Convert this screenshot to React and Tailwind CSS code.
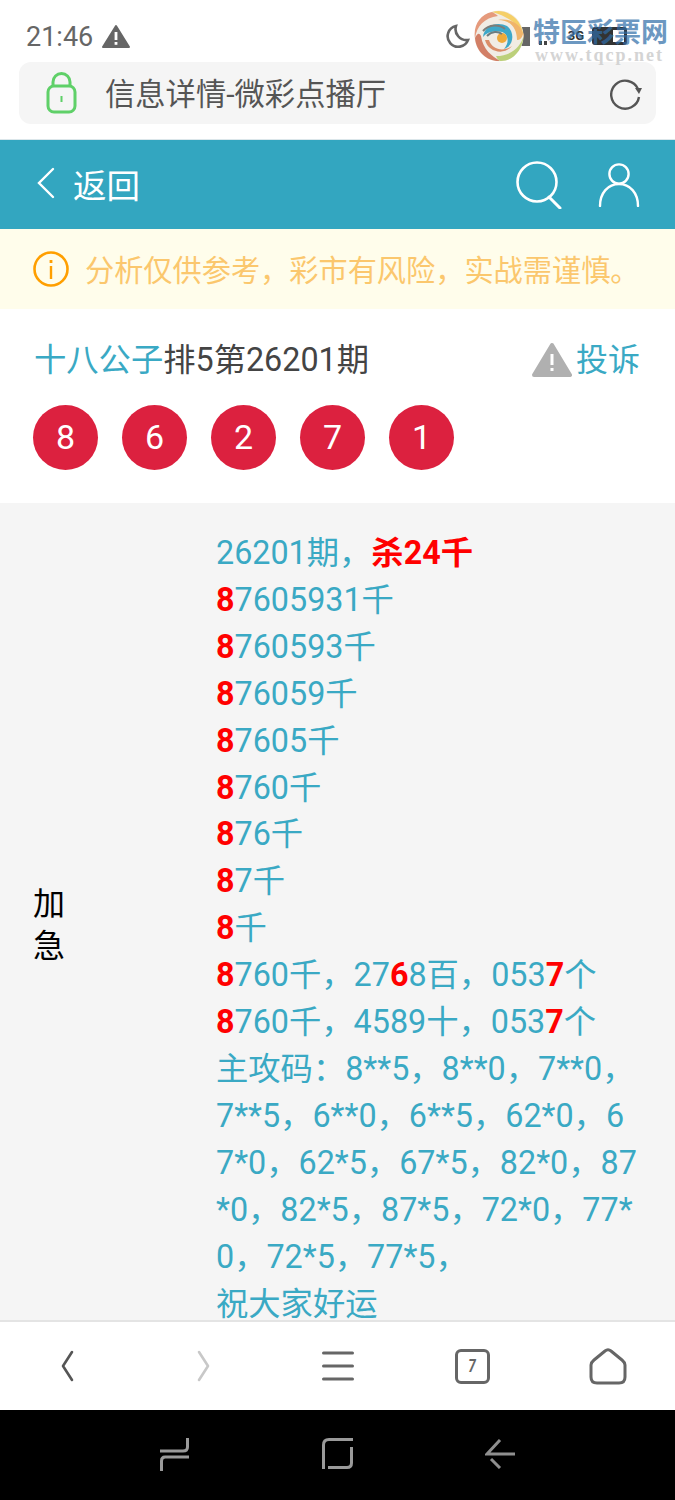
const CJK = "font-['Roboto','Noto_Sans_CJK_SC',sans-serif]";

function Red({ children }) {
    return <b className="text-[#ff0000] font-bold">{children}</b>;
}

function Ball({ n }) {
    return (
        <div className="w-[65px] h-[65px] rounded-full bg-[#dc213f] text-white text-[34px] flex items-center justify-center">
            {n}
        </div>
    );
}

function Watermark() {
    return (
        <div className="absolute left-[474px] top-[10px] w-[195px] h-[52px]">
            <svg width="50" height="52" viewBox="0 0 50 52" className="absolute left-0 top-0">
                <ellipse cx="25" cy="26" rx="24.5" ry="25.5" fill="#f1ece4" />
                <path d="M18 2 C32 -2 48 8 49.5 26 C45 14 33 6 18 2Z" fill="#f5cf68" />
                <path d="M18 2 C6 4 -1 16 1 28 C3 16 10 8 24 6 C22 4 20 3 18 2Z" fill="#e59a7c" />
                <path d="M1 28 C2 42 14 52 26 51 C18 46 9 40 7 26 C5 22 3 24 1 28Z" fill="#d27f66" />
                <path d="M26 51 C38 52 49 40 49.5 26 C47 36 38 46 22 46 C23 48 24 50 26 51Z" fill="#bcd07a" />
                <path d="M49 24 C46 12 34 8 24 10 C36 10 43 18 43 30 C46 30 48 28 49 24Z" fill="#f0b46a" />
                <path d="M9 27 C10 15 24 11 33 16 C41 22 40 36 30 39 C36 32 34 24 28 22 C20 20 13 22 9 27Z" fill="#3ea8c9" />
                <circle cx="28" cy="28" r="5" fill="#efaa3a" />
                <path d="M11 30 C14 42 30 46 38 36 C30 42 18 40 15 30Z" fill="#da8d68" />
                <path d="M9 21 C15 14 25 14 31 19" fill="none" stroke="#7d7d78" strokeWidth="2" />
                <path d="M13 26 C18 21 24 21 28 24" fill="none" stroke="#6d7d80" strokeWidth="2" />
            </svg>
            <div className="absolute left-[59px] top-[5px] text-[27px] leading-[32px] font-bold text-[#2f6da8] opacity-70 whitespace-nowrap font-['Noto_Sans_CJK_SC',sans-serif]">特区彩票网</div>
            <div className="absolute left-[61px] top-[35px] text-[18px] leading-[20px] font-bold text-[#d4d4d4] whitespace-nowrap font-['Liberation_Serif',serif] tracking-[2px]">www.tqcp.net</div>
        </div>
    );
}

export default function App() {
    return (
        <div className={`relative w-[675px] h-[1500px] flex flex-col bg-white overflow-hidden ${CJK}`}>
            {/* status bar */}
            <div className="h-[62px] flex items-center justify-between pl-[26px] pr-[48px] pt-[10px] text-[#666666] shrink-0">
                <div className="flex items-center gap-[9px]">
                    <span className="text-[27px] leading-none pt-[2px]">21:46</span>
                    <svg width="28" height="24" viewBox="0 0 28 24">
                        <path d="M14 2 L27 23 H1 Z" fill="#666666" stroke="#666666" strokeLinejoin="round" strokeWidth="2" />
                        <rect x="12.6" y="8" width="2.8" height="8" fill="#fff" />
                        <rect x="12.6" y="18" width="2.8" height="2.8" fill="#fff" />
                    </svg>
                </div>
                <div className="flex items-center">
                    <svg width="26" height="26" viewBox="0 0 26 26" className="mr-[19px]">
                        <path d="M11 3 A10.5 10.5 0 1 0 23 17 A11 11 0 0 1 11 3 Z" fill="none" stroke="#666666" strokeWidth="2.6" />
                    </svg>
                    <div className="w-[40px] h-[19px] bg-[#666666] text-white text-[12px] flex items-center justify-end pr-[6px]">HD</div>
                    <div className="w-[26px] h-[19px] mr-[10px] flex items-end justify-center gap-[2px] pb-[1px]">
                        <div className="w-[3px] h-[4px] bg-[#444444]" />
                        <div className="w-[3px] h-[4px] bg-[#444444]" />
                    </div>
                    <div className="w-[20px] h-[19px] text-[#333333] text-[13px] font-bold flex items-center justify-center">3G</div>
                    <div className="ml-[6px] w-[35px] h-[18px] border-[3px] border-[#333333] rounded-[3px] flex">
                        <div className="w-[18px] h-full bg-[#333333]" />
                    </div>
                </div>
            </div>

            {/* url bar */}
            <div className="h-[78px] shrink-0 pl-[19px] pr-[19px] pb-[15px] border-b border-[#dbe6ea]">
                <div className="h-[62px] bg-[#f5f5f5] rounded-[12px] flex items-center pl-[27px] pr-[13px]">
                    <svg width="32" height="44" viewBox="0 0 32 44" className="mr-[27px]">
                        <rect x="2" y="15" width="27" height="26" rx="6" fill="none" stroke="#5fd068" strokeWidth="3" />
                        <path d="M7 15 V11 A8.5 8.5 0 0 1 24 11 V15" fill="none" stroke="#5fd068" strokeWidth="3" />
                        <rect x="14.5" y="25" width="2" height="6" fill="#5fd068" />
                    </svg>
                    <span className="text-[30.3px] text-[#555555] leading-none flex-1 whitespace-nowrap pt-[4px]">信息详情-微彩点播厅</span>
                    <svg width="34" height="34" viewBox="0 0 34 34">
                        <path d="M29 13 A14 14 0 1 0 30 21" fill="none" stroke="#555555" strokeWidth="2.4" />
                        <path d="M26 12 H33 L30 18 Z" fill="#555555" />
                    </svg>
                </div>
            </div>

            {/* header */}
            <div className="h-[89px] shrink-0 bg-[#33a6c0] flex items-center justify-between pl-[37px] pr-[35px] text-white">
                <div className="flex items-center gap-[18px]">
                    <svg width="18" height="32" viewBox="0 0 18 32" className="-mt-[3px]">
                        <path d="M16 2 L2 16 L16 30" fill="none" stroke="#fff" strokeWidth="2.4" strokeLinecap="round" />
                    </svg>
                    <span className="text-[33.5px] leading-none pt-[4px]">返回</span>
                </div>
                <div className="flex items-center gap-[36px]">
                    <svg width="46" height="48" viewBox="0 0 46 48" className="-ml-[1px]">
                        <circle cx="21" cy="21" r="19.5" fill="none" stroke="#fff" strokeWidth="2.6" />
                        <path d="M33 36 L44 47" fill="none" stroke="#fff" strokeWidth="3" strokeLinecap="round" />
                    </svg>
                    <svg width="42" height="44" viewBox="0 0 42 44">
                        <circle cx="21" cy="11" r="9.6" fill="none" stroke="#fff" strokeWidth="2.4" />
                        <path d="M2 43 C2 30 10 21 21 21 C32 21 40 30 40 43" fill="none" stroke="#fff" strokeWidth="2.4" strokeLinecap="round" />
                    </svg>
                </div>
            </div>

            {/* notice */}
            <div className="h-[80px] shrink-0 bg-[#fffdeb] flex items-center pl-[33px] gap-[16px]">
                <svg width="36" height="36" viewBox="0 0 36 36">
                    <circle cx="18" cy="18" r="16.5" fill="none" stroke="#ff9f00" strokeWidth="2.6" />
                    <rect x="16.8" y="15" width="2.4" height="13" fill="#ff9f00" />
                    <rect x="16.6" y="9" width="2.8" height="3" fill="#ff9f00" />
                </svg>
                <span className="text-[29.2px] leading-none text-[#fbc76d] whitespace-nowrap pt-[6px]">分析仅供参考，彩市有风险，实战需谨慎。</span>
            </div>

            {/* title + balls */}
            <div className="h-[194px] shrink-0 pl-[33px] pr-[35px] pt-[30px]">
                <div className="flex items-center justify-between h-[42px]">
                    <div className="text-[32.3px] leading-none text-[#444444] whitespace-nowrap pl-[1px]">
                        <span className="text-[#3aa9c4]">十八公子</span>排5第26201期
                    </div>
                    <div className="flex items-center gap-[4px] text-[32px] leading-none text-[#3aa9c4]">
                        <svg width="40" height="36" viewBox="0 0 40 36">
                            <path d="M20 3 L38 33 H2 Z" fill="#b0b0b0" stroke="#b0b0b0" strokeWidth="4" strokeLinejoin="round" />
                            <rect x="18.5" y="12" width="3" height="11" fill="#fff" />
                            <rect x="18.5" y="26" width="3" height="3" fill="#fff" />
                        </svg>
                        投诉
                    </div>
                </div>
                <div className="flex gap-[24px] mt-[24px]">
                    <Ball n="8" />
                    <Ball n="6" />
                    <Ball n="2" />
                    <Ball n="7" />
                    <Ball n="1" />
                </div>
            </div>

            {/* content, the row runs on under the toolbar */}
            <div className="flex-1 min-h-0 bg-[#f5f5f5] overflow-hidden">
                <div className="flex items-center">
                    <div className="w-[216px] shrink-0 pl-[33px] text-[32px] leading-[42px] text-black">加<br />急</div>
                    <div className="w-[430px] pt-[27px] pb-[20px] text-[32.3px] leading-[46.9px] text-[#3aa9c4] whitespace-nowrap">
                        26201期，<Red>杀24千</Red><br />
                        <Red>8</Red>7605931千<br />
                        <Red>8</Red>760593千<br />
                        <Red>8</Red>76059千<br />
                        <Red>8</Red>7605千<br />
                        <Red>8</Red>760千<br />
                        <Red>8</Red>76千<br />
                        <Red>8</Red>7千<br />
                        <Red>8</Red>千<br />
                        <Red>8</Red>760千，27<Red>6</Red>8百，053<Red>7</Red>个<br />
                        <Red>8</Red>760千，4589十，053<Red>7</Red>个<br />
                        主攻码：8**5，8**0，7**0，<br />
                        7**5，6**0，6**5，62*0，6<br />
                        7*0，62*5，67*5，82*0，87<br />
                        *0，82*5，87*5，72*0，77*<br />
                        0，72*5，77*5，<br />
                        祝大家好运
                    </div>
                </div>
            </div>

            {/* browser toolbar */}
            <div className="h-[90px] shrink-0 bg-white border-t-2 border-[#e4e4e4] grid grid-cols-5 items-center">
                <div className="flex justify-center">
                    <svg width="16" height="32" viewBox="0 0 16 32"><path d="M12 2 L3 16 L12 30" fill="none" stroke="#555555" strokeWidth="2.6" strokeLinecap="round" strokeLinejoin="round" /></svg>
                </div>
                <div className="flex justify-center">
                    <svg width="16" height="32" viewBox="0 0 16 32"><path d="M4 2 L13 16 L4 30" fill="none" stroke="#c8c8c8" strokeWidth="2.6" strokeLinecap="round" strokeLinejoin="round" /></svg>
                </div>
                <div className="flex justify-center">
                    <svg width="32" height="32" viewBox="0 0 32 32"><path d="M1.5 3 H30.5 M1.5 16 H30.5 M1.5 29 H30.5" fill="none" stroke="#666666" strokeWidth="3" strokeLinecap="round" /></svg>
                </div>
                <div className="flex justify-center">
                    <div className="w-[35px] h-[35px] border-[3px] border-[#666666] rounded-[6px] flex items-center justify-center text-[18px] font-bold italic text-[#666666] leading-none">
                        <span className="scale-x-75">7</span>
                    </div>
                </div>
                <div className="flex justify-center">
                    <svg width="38" height="38" viewBox="0 0 38 38"><path d="M16 4 Q19 1.5 22 4 L33 13 Q36 15.5 36 18 V30 Q36 36 30 36 H8 Q2 36 2 30 V18 Q2 15.5 5 13 Z" fill="none" stroke="#666666" strokeWidth="3" strokeLinejoin="round" /></svg>
                </div>
            </div>

            {/* android nav */}
            <div className="h-[90px] shrink-0 bg-black">
                <div className="flex items-center justify-between h-full pl-[160px] pr-[160px] -mt-[1px]">
                    <svg width="30" height="33" viewBox="0 0 30 33"><path d="M27.5 0 V9 Q27.5 13 23 13 H0 M29 19 H5 Q1.5 19 1.5 23 V33" fill="none" stroke="#9a9a9a" strokeWidth="3" /></svg>
                    <svg width="32" height="32" viewBox="0 0 32 32"><path d="M31 1.5 H7 Q1.5 1.5 1.5 7 V31 M29.5 9 V25 Q29.5 29.5 25 29.5 H6" fill="none" stroke="#9a9a9a" strokeWidth="3" /></svg>
                    <svg width="30" height="30" viewBox="0 0 30 30"><path d="M15 1 L2 15 H30 M6 20 L15 29" fill="none" stroke="#8f8f8f" strokeWidth="3" /></svg>
                </div>
            </div>

            <Watermark />
        </div>
    );
}
